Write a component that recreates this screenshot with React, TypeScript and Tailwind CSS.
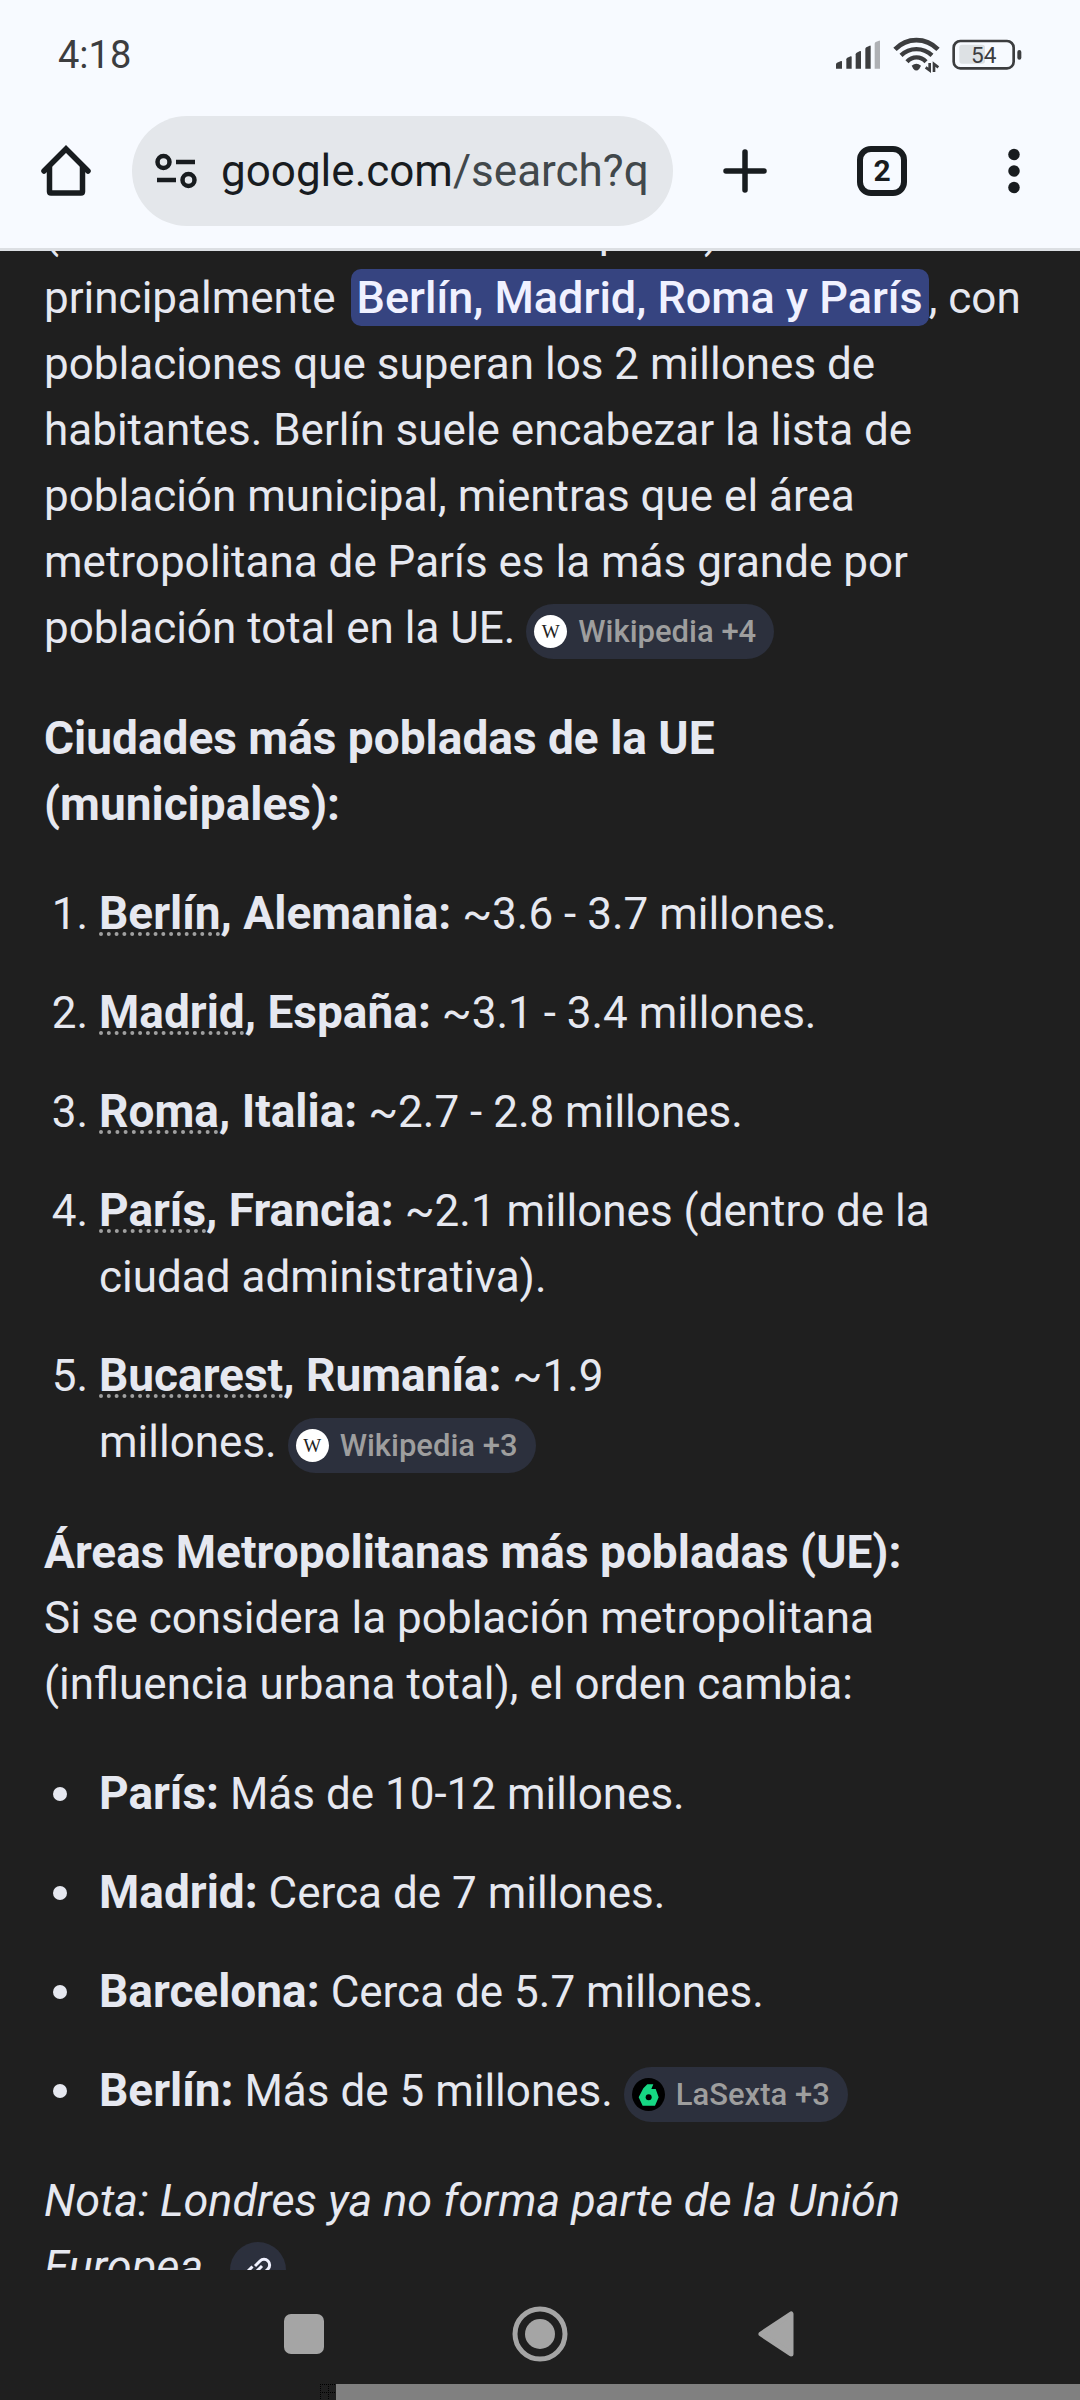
import type { ReactNode } from 'react';

interface City {
  name: string;
  country: string;
  text: ReactNode;
}

interface Area {
  name: string;
  text: ReactNode;
}

function SignalIcon() {
  return (
    <svg width="45" height="30" viewBox="45 45 135 90" fill="#3c3d3f">
      <path d="M45 118Q45 115 48 113L60 108Q63 107 63 110V131H45Z" />
      <path d="M76 103Q76 100 79 98L89 94Q92 93 92 96V131H76Z" />
      <path d="M104 88Q104 85 107 83L117 78Q120 77 120 80V131H104Z" />
      <path d="M133 72Q133 69 136 67L146 62Q149 61 149 64V131H133Z" />
      <path d="M161 56Q161 53 164 51L174 47Q177 46 177 49V131H161Z" fill="#afb1b5" />
    </svg>
  );
}

function WifiIcon() {
  return (
    <svg width="47" height="36" viewBox="214 36 141 108" fill="none" stroke="#3c3d3f">
      <path d="M220 73C256 36 312 36 349 73" strokeWidth="14" />
      <path d="M238 91C264 66 304 66 331 91" strokeWidth="13" />
      <path d="M256 110C272 93 297 93 313 110" strokeWidth="13" />
      <path d="M270 122Q284 110 298 122L293 131Q284 142 275 131Z" fill="#3c3d3f" stroke="none" />
      <path d="M324 114V136L312 127M337 141V117L350 127" strokeWidth="8" />
    </svg>
  );
}

function BatteryIcon() {
  return (
    <svg width="70" height="32" viewBox="398 40 210 96">
      <rect x="420" y="57" width="77" height="57" rx="8" fill="#dde1e4" />
      <rect x="403" y="46" width="180" height="82" rx="20" fill="none" stroke="#3c3d3f" strokeWidth="8" />
      <rect x="594" y="73" width="12" height="29" rx="6" fill="#3c3d3f" />
      <text x="493" y="112" textAnchor="middle" fontSize="68" fill="#3c3d3f">54</text>
    </svg>
  );
}

function HomeIcon() {
  return (
    <svg width="52" height="52" viewBox="0 0 52 52" fill="none" stroke="#181c1f" strokeWidth="5.5" strokeLinejoin="round" strokeLinecap="round">
      <path d="M4 26L26 4L48 26" strokeLinejoin="miter" />
      <path d="M9.5 22V46.5Q9.5 48 11 48H41Q42.5 48 42.5 46.5V22" />
    </svg>
  );
}

function SiteSettingsIcon() {
  return (
    <svg width="42" height="36" viewBox="0 0 42 36" fill="none" stroke="#181c1f" strokeWidth="4.5">
      <circle cx="8.5" cy="9" r="6" />
      <path d="M21 9H40M2 27H21" />
      <circle cx="33.5" cy="27" r="6" />
    </svg>
  );
}

function LinkIcon() {
  return (
    <svg width="56" height="56" viewBox="0 0 56 56" fill="none" stroke="#f0f1ff" strokeWidth="3">
      <path d="M25 24L30 19A5.6 5.6 0 0 1 38 27L33 32" />
      <path d="M31 32L26 37A5.6 5.6 0 0 1 18 29L22.5 24.5" />
      <path d="M24 32L32 24" />
    </svg>
  );
}

function WikipediaLogo() {
  return (
    <span className="flex size-[33px] items-center justify-center rounded-full bg-white font-['Liberation_Serif',serif] text-[19px] leading-none font-normal text-[#222222]">
      W
    </span>
  );
}

function LaSextaLogo() {
  return (
    <svg width="33" height="33" viewBox="0 0 99 99">
      <circle cx="49.5" cy="49.5" r="49.5" fill="#000000" />
      <path d="M46 19H64L58 33H71L80 58L69 83H32L20 58L34 31Z" fill="#16d783" />
      <circle cx="50" cy="58" r="9" fill="#000000" />
    </svg>
  );
}

function SourceChip({ logo, label }: { logo: ReactNode; label: string }) {
  return (
    <button className="inline-flex h-[55px] items-center gap-[11px] rounded-full bg-[#2c303d] pr-[18px] pl-2 align-middle text-[31px] leading-none font-medium text-[#9e9e9e]">
      {logo}
      {label}
    </button>
  );
}

const cities: City[] = [
  { name: 'Berlín', country: 'Alemania', text: '~3.6 - 3.7 millones.' },
  { name: 'Madrid', country: 'España', text: '~3.1 - 3.4 millones.' },
  { name: 'Roma', country: 'Italia', text: '~2.7 - 2.8 millones.' },
  {
    name: 'París',
    country: 'Francia',
    text: <>~2.1 millones (dentro de la <br />ciudad administrativa).</>,
  },
  {
    name: 'Bucarest',
    country: 'Rumanía',
    text: <>~1.9 <br />millones. <SourceChip logo={<WikipediaLogo />} label="Wikipedia +3" /></>,
  },
];

const areas: Area[] = [
  { name: 'París', text: 'Más de 10-12 millones.' },
  { name: 'Madrid', text: 'Cerca de 7 millones.' },
  { name: 'Barcelona', text: 'Cerca de 5.7 millones.' },
  {
    name: 'Berlín',
    text: <>Más de 5 millones. <SourceChip logo={<LaSextaLogo />} label="LaSexta +3" /></>,
  },
];

export default function App() {
  return (
    <div className="flex h-screen flex-col bg-[#1f1f1f] font-['Roboto',sans-serif]">
      <header className="shrink-0 border-b-[3px] border-[#dcdfe3] bg-[#f7faff]">
        {/* Status bar */}
        <div className="flex h-[110px] items-center justify-between px-[58px]">
          <span className="text-[38px] leading-none text-[#3c3d3f]">4:18</span>
          <div className="flex items-center gap-3">
            <SignalIcon />
            <WifiIcon />
            <BatteryIcon />
          </div>
        </div>

        {/* Toolbar */}
        <div className="flex items-center pt-1.5 pb-[22px]">
          <button aria-label="Inicio" className="flex w-[132px] justify-center">
            <HomeIcon />
          </button>
          <button className="flex h-[110px] min-w-0 flex-1 items-center gap-6 overflow-hidden rounded-full bg-[#e4e7eb] pl-[23px] text-[44px] leading-none whitespace-nowrap text-[#181c1f]">
            <SiteSettingsIcon />
            <span>google.com<span className="text-[#41484b]">/search?q</span></span>
          </button>
          <button aria-label="Nueva pestaña" className="flex w-36 justify-center">
            <svg width="44" height="44" viewBox="0 0 44 44" stroke="#181c1f" strokeWidth="5.5" strokeLinecap="round">
              <path d="M22 3V41M3 22H41" />
            </svg>
          </button>
          <button aria-label="Pestañas abiertas" className="flex w-[130px] justify-center">
            <span className="flex size-[50px] items-center justify-center rounded-[14px] border-[6px] border-[#181c1f] text-[30px] leading-none font-bold text-[#181c1f]">
              2
            </span>
          </button>
          <button aria-label="Más opciones" className="flex w-[133px] justify-center">
            <svg width="12" height="46" viewBox="0 0 12 46" fill="#181c1f">
              <circle cx="6" cy="6.5" r="5.75" />
              <circle cx="6" cy="23" r="5.75" />
              <circle cx="6" cy="39.5" r="5.75" />
            </svg>
          </button>
        </div>
      </header>

      {/* Answer, scrolled partway down */}
      <main className="min-h-0 flex-1 overflow-hidden">
        <article className="-mt-[52px] flex flex-col gap-11 px-11 text-[44px] leading-[66px] text-[#e6e8f0]">
          <p>
            (dentro de los límites municipales) son <br />
            principalmente{' '}
            <mark className="ml-1 rounded-[10px] bg-[#364480] px-1.5 py-0.5 text-[45px] leading-none font-medium text-[#f0f1ff]">Berlín, Madrid, Roma y París</mark>
            , con <br />
            poblaciones que superan los 2 millones de <br />
            habitantes. Berlín suele encabezar la lista de <br />
            población municipal, mientras que el área <br />
            metropolitana de París es la más grande por <br />
            población total en la UE. <SourceChip logo={<WikipediaLogo />} label="Wikipedia +4" />
          </p>

          <h2 className="text-[46px] font-bold">
            Ciudades más pobladas de la UE <br />
            (municipales):
          </h2>

          <ol className="flex list-decimal flex-col gap-[33px] pl-[55px]">
            {cities.map((city) => (
              <li key={city.name}>
                <strong className="text-[46px] leading-none font-bold">
                  <a
                    href={`#${city.name}`}
                    className="underline decoration-[#a0a0a0] decoration-dotted decoration-4 underline-offset-3 [text-decoration-skip-ink:none]"
                  >
                    {city.name}
                  </a>
                  , {city.country}:
                </strong>{' '}
                {city.text}
              </li>
            ))}
          </ol>

          <section>
            <h2 className="text-[46px] font-bold">Áreas Metropolitanas más pobladas (UE):</h2>
            <p>
              Si se considera la población metropolitana <br />
              (influencia urbana total), el orden cambia:
            </p>
          </section>

          <ul className="flex flex-col gap-[33px]">
            {areas.map((area) => (
              <li
                key={area.name}
                className="flex before:mt-[26px] before:mr-8 before:ml-[9px] before:size-3.5 before:shrink-0 before:rounded-full before:bg-[#e6e8f0]"
              >
                <p>
                  <strong className="text-[46px] leading-none font-bold">{area.name}:</strong> {area.text}
                </p>
              </li>
            ))}
          </ul>

          <p className="text-[45px] italic">
            Nota: Londres ya no forma parte de la Unión <br />
            Europea.{' '}
            <button aria-label="Ver enlaces" className="ml-1 inline-flex size-14 items-center justify-center rounded-full bg-[#2c303d] align-middle">
              <LinkIcon />
            </button>
          </p>
        </article>
      </main>

      {/* System navigation */}
      <nav className="shrink-0">
        <div className="flex h-[114px] items-center justify-center pt-3.5">
          <button aria-label="Recientes" className="flex w-[236px] justify-center">
            <span className="size-10 rounded-[7px] bg-[#a5a5a5]" />
          </button>
          <button aria-label="Pantalla de inicio" className="flex w-[236px] justify-center">
            <svg width="56" height="56" viewBox="0 0 56 56">
              <circle cx="28" cy="28" r="25" fill="none" stroke="#a5a5a5" strokeWidth="5" />
              <circle cx="28" cy="28" r="15" fill="#a5a5a5" />
            </svg>
          </button>
          <button aria-label="Atrás" className="flex w-[236px] justify-center">
            <svg width="38" height="46" viewBox="0 0 38 46" fill="#a5a5a5" stroke="#a5a5a5" strokeWidth="5" strokeLinejoin="round">
              <path d="M34 3V43L4 23Z" />
            </svg>
          </button>
        </div>
        <div className="flex h-4 pl-80">
          <svg width="16" height="16" viewBox="0 0 16 16" fill="none" stroke="#000000" strokeDasharray="1 1">
            <path d="M0 0.5H16M0 8.5H16M0.5 0V16M8.5 0V16" />
          </svg>
          <div className="flex-1 bg-[#808080]" />
        </div>
      </nav>
    </div>
  );
}
